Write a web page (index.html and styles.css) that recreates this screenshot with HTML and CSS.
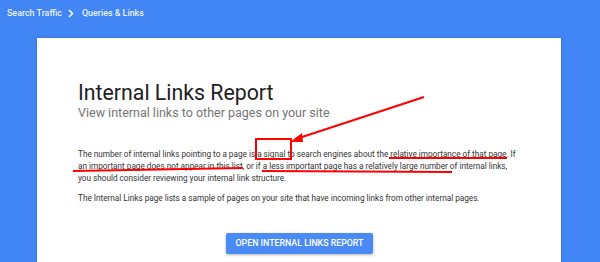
FILE: index.html
```html
<!DOCTYPE html>
<html lang="en">
<head>
  <meta charset="UTF-8" />
  <title>Internal Links Report</title>
  <link rel="stylesheet" href="styles.css">
</head>
<body>

<header class="crumbs">
  <span>Search Traffic</span>
  <svg class="chev" width="6" height="9" viewBox="0 0 6 9"><path d="M1 1l3.5 3.5L1 8" fill="none" stroke="#fff" stroke-width="1.5"/></svg>
  <span>Queries &amp; Links</span>
</header>

<main class="card">
  <h1>Internal Links Report</h1>
  <h2>View internal links to other pages on your site</h2>
  <p>The number of internal links pointing to a page is a signal to search engines about the relative importance of that page. If an important page does not appear in this list, or if a less important page has a relatively large number of internal links, you should consider reviewing your internal link structure.</p>
  <p>The Internal Links page lists a sample of pages on your site that have incoming links from other internal pages.</p>
  <div class="actions">
    <a class="btn" href="#">OPEN INTERNAL LINKS REPORT</a>
  </div>
</main>

<svg class="marks" width="600" height="262" viewBox="0 0 600 262">
  <g stroke="#f00" fill="none" stroke-width="2">
    <rect x="256" y="139" width="35" height="20"/>
    <line x1="424" y1="97" x2="296" y2="139"/>
    <line x1="389" y1="158" x2="507" y2="158"/>
    <line x1="73" y1="171" x2="243" y2="168"/>
    <line x1="262" y1="171" x2="452" y2="172"/>
  </g>
  <path d="M290 142l12 -9l1 9z" fill="#f00"/>
</svg>

</body>
</html>
```

FILE: styles.css
```css
* { margin: 0; padding: 0; box-sizing: border-box; }
body { background: #4285f4; font-family: Roboto, "Liberation Sans", Arial, sans-serif; color: #333; overflow: hidden; height: 262px; }
.crumbs { height: 38px; padding: 7px 0 0 7px; display: flex; align-items: flex-start; color: rgba(255,255,255,0.92); font-size: 8.9px; font-weight: 500; line-height: 12px; }
.chev { margin: 2px 8px 0 6px; }
.card { margin: 0 39px 0 37px; background: #fff; padding: 42px 43px 20px 41px; height: 224px; box-shadow: 0 0 3px rgba(0,0,0,0.2); }
h1 { font-size: 21.3px; font-weight: 400; color: #212121; line-height: 25px; }
h2 { font-size: 12.5px; font-weight: 400; color: #757575; line-height: 16px; margin-bottom: 26.5px; }
p { font-size: 8.2px; line-height: 12.3px; color: #333; margin-bottom: 8px; }
.actions { display: flex; justify-content: center; padding-top: 20.5px; padding-left: 3px; }
.btn { background: #4a8af4; color: #fff; text-decoration: none; font-size: 8.8px; font-weight: 500; padding: 0 10px; height: 21px; line-height: 21px; border-radius: 2px; box-shadow: 0 1px 3px rgba(0,0,0,0.3); }
.marks { position: absolute; left: 0; top: 0; pointer-events: none; }
```
